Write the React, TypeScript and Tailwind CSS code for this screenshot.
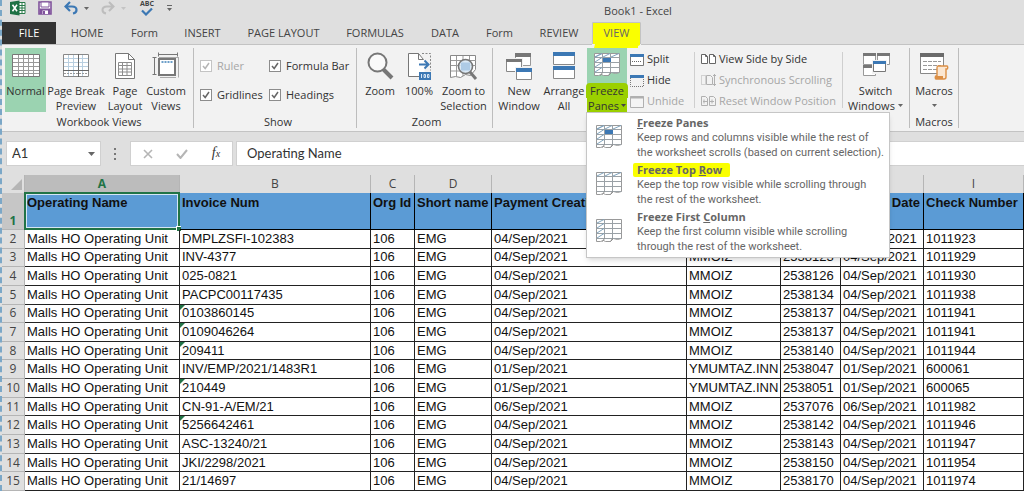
import type { ReactNode } from 'react';
import clsx from 'clsx';

type IconProps = { children: ReactNode; w?: number; h?: number };

function Svg({ children, w = 28, h = 28 }: IconProps) {
  return (
    <svg width={w} height={h} viewBox={`0 0 ${w} ${h}`} fill="none" className="shrink-0" aria-hidden="true">
      {children}
    </svg>
  );
}

function Caret({ className = 'text-[#666]' }: { className?: string }) {
  return (
    <svg width="5" height="3" viewBox="0 0 5 3" className={clsx('inline-block shrink-0', className)} aria-hidden="true">
      <path d="M0 0h5L2.500 3z" fill="currentColor" />
    </svg>
  );
}

/* ---------- quick access toolbar ---------- */

const excelIcon = (
  <Svg w={16} h={16}>
    <path d="M9 2.500h6v11H9" fill="#fff" stroke="#2a7a4b" />
    <path d="M9 5.500h6M9 8h6M9 10.500h6M12 3v10" stroke="#2a7a4b" />
    <path d="M0 2l9.500-1.500v15L0 14z" fill="#1e7145" />
    <path d="M2.500 4.800l4.500 6.400M7 4.800l-4.500 6.400" stroke="#fff" strokeWidth="1.600" />
  </Svg>
);

const saveIcon = (
  <Svg w={14} h={14}>
    <path d="M1 1h12v12H1z" fill="#fff" stroke="#80539c" strokeWidth="1.600" />
    <path d="M3 1h8v5H3z" fill="#fff" stroke="#80539c" />
    <path d="M1.500 7.500h11V13h-11z" fill="#80539c" />
    <path d="M4.500 9.500h5.500V13H4.500z" fill="#fff" />
    <path d="M5 10h2v3H5z" fill="#80539c" />
  </Svg>
);

const arrowPath = 'M6 1L1.500 5.500 6 10M2 5.500h6c3 0 4.500 1.500 4.500 3.500 0 1.500-1 3-3.500 3.500';

const undoIcon = (
  <Svg w={14} h={14}>
    <path d={arrowPath} stroke="#3c78b4" strokeWidth="2.200" />
  </Svg>
);

const redoIcon = (
  <Svg w={14} h={14}>
    <g transform="translate(14 0) scale(-1 1)">
      <path d={arrowPath} stroke="#bdbdbd" strokeWidth="2" />
    </g>
  </Svg>
);

/* ---------- ribbon icons ---------- */

const normalIcon = (
  <Svg>
    <path d="M.5 2.500h27v22H.5z" fill="#fff" stroke="#777" />
    <path d="M1 6.500h26M1 10.500h26M1 14.500h26M1 18.500h26M1 21.500h26M6.500 3v21M11.500 3v21M16.500 3v21M21.500 3v21" stroke="#999" />
  </Svg>
);

const pageBreakIcon = (
  <Svg>
    <path d="M1.500 2.500h25v22h-25z" fill="#fff" stroke="#888" />
    <path d="M2 6.500h24M2 10.500h24M2 14.500h24M6.500 3v21M11.500 3v21M20.500 3v21" stroke="#b9cfe0" />
    <path d="M16.500 2v23M1 18.500h26" stroke="#666" />
    <path d="M2 21.500h24" stroke="#999" strokeDasharray="2 1" />
  </Svg>
);

const pageLayoutIcon = (
  <Svg>
    <path d="M4.500 1.500h13l6 6v19h-19z" fill="#fff" stroke="#777" />
    <path d="M17.500 1.500v6h6" stroke="#777" />
    <path d="M7.500 10.500h13v13h-13zM7.500 13.500h13M7.500 17h13M7.500 20h13M11.500 10.500v13M16 10.500v13" stroke="#8d8d8d" />
  </Svg>
);

const customViewsIcon = (
  <Svg>
    <path d="M6.500 2.500h19M6.500.5v4M25.500.5v4M2.500 5v17M.5 5.500h4M.5 22.500h4" stroke="#777" />
    <path d="M7 5.500h20M26.500 5v20.500M8 25.500h16" stroke="#aaa" />
    <path d="M7 7h16v16H7z" fill="#fff" stroke="#777" strokeWidth="2" />
    <path d="M9.500 10h11" stroke="#6d9fc9" strokeWidth="2" strokeDasharray="2 1" />
  </Svg>
);

const zoomIcon = (
  <Svg>
    <path d="M17 17l9 9" stroke="#777" strokeWidth="4" />
    <circle cx="11.500" cy="10.500" r="9" fill="#fafafa" stroke="#777" strokeWidth="2" />
  </Svg>
);

const hundredIcon = (
  <Svg>
    <path d="M3.500 1.500h10l6 6v17h-16z" fill="#fff" />
    <path d="M14 24.500H3.500v-23h10l5 6h-5v-6" stroke="#777" />
    <path d="M17 1.500h8.500v17" stroke="#888" strokeDasharray="2 1.500" />
    <path d="M14 12.500h8M19.500 8.500l4 4-4 4" stroke="#3c78b4" strokeWidth="2" />
    <path d="M14 20h12v8H14z" fill="#3c78b4" />
    <path d="M16.500 22v4M19 22.500h1.500v3H19zM22.500 22.500H24v3h-1.500z" stroke="#dbe8f5" />
  </Svg>
);

const zoomSelectionIcon = (
  <Svg>
    <path d="M.5 3.500h25v14l-5 6-5-1-5 3-5-1-5 1z" fill="#fff" stroke="#888" />
    <path d="M1 8.500h25M1 13.500h25M1 19h14M6.500 4v20M13 4v20M19.500 4v8" stroke="#999" />
    <path d="M20 20l6 7" stroke="#777" strokeWidth="3" />
    <circle cx="15.500" cy="14.500" r="7" fill="#d8e8f5" fillOpacity=".9" stroke="#777" strokeWidth="1.600" />
    <path d="M11 10.500h9v8h-9z" fill="#aecbe6" />
  </Svg>
);

const newWindowIcon = (
  <Svg>
    <path d="M10.500 1.500h15v12h-15z" fill="#fff" stroke="#999" />
    <path d="M10 1h16v4H10z" fill="#777" />
    <path d="M0 6h18v14H0z" fill="#f2f2f2" />
    <path d="M1.500 7.500h15v12h-15z" fill="#fff" stroke="#888" />
    <path d="M1 7h16v3H1z" fill="#777" />
    <path d="M10 15h18v13H10z" fill="#f2f2f2" />
    <path d="M11.500 16.500h15v11h-15z" fill="#fff" stroke="#888" />
    <path d="M11 16h16v4H11z" fill="#3c78b4" />
  </Svg>
);

const arrangeIcon = (
  <Svg>
    <path d="M3.500.5h21v12h-21zM3.500 14.500h21v12h-21z" fill="#fff" stroke="#888" />
    <path d="M3 0h22v4H3zM3 14h22v4H3z" fill="#3c78b4" />
  </Svg>
);

type FreezeKind = 'panes' | 'row' | 'column';

function FreezeIcon({ kind }: { kind: FreezeKind }) {
  return (
    <Svg w={28} h={26}>
      <path d="M1.500 1.500h25v19l-4 1-4-1-3 3h-5l-2-1-3 1h-4z" fill="#fff" stroke="#999" />
      <path d="M1.500 5.500h25M1.500 10.500h25M1.500 15.500h25M1.500 20.500h25M9.500 1.500v19M17.500 1.500v19" stroke="#9aa1a6" />
      {kind !== 'column' && <path d="M2 5l7-3.500M10 5l7-3.500M18 5l8-3.500" stroke="#7fa3bd" />}
      {kind !== 'row' && <path d="M2 5l7-3.500M2 10l7-4.500M2 15l7-4.500M2 20l7-4.500" stroke="#7fa3bd" />}
      {kind === 'panes' && <path d="M10 6h8v4h-8z" fill="#3c78b4" />}
      <path d="M9.500 20.500l-2 3M17.500 20.500l-2 3" stroke="#888" />
    </Svg>
  );
}

const switchIcon = (
  <Svg>
    <path d="M1.500 1.500h12v11h-12zM15.500 1.500h12v11h-12zM1.500 13.500h12v10h-12z" fill="#fff" stroke="#999" />
    <path d="M1 1h13v3H1zM15 1h13v3H15zM1 13h13v3H1z" fill="#777" />
    <path d="M10 8h15v14H10z" fill="#f2f2f2" />
    <path d="M11.500 9.500h12v10h-12z" fill="#fff" stroke="#777" />
    <path d="M11 9h13v3H11z" fill="#3c78b4" />
  </Svg>
);

const macrosIcon = (
  <Svg w={30}>
    <path d="M1.500 1.500h23v20h-23z" fill="#fff" stroke="#888" />
    <path d="M1 1h24v4H1z" fill="#6b6b6b" />
    <path d="M4 9.500h18M4 13.500h18M4 17.500h14" stroke="#999" strokeDasharray="4 1" />
    <path d="M19 14h9c1 0 1 3 0 3h-1v8c0 2-1 2-2 2h-8c-1 0-1-3 0-3h1v-8c0-1 0-2 1-2z" fill="#fbe7d2" stroke="#dc8f45" strokeWidth="1.400" />
    <path d="M16 24h8v3h-8z" fill="#dc8f45" />
  </Svg>
);

/* ---------- small ribbon icons ---------- */

const splitIcon = (
  <Svg w={14} h={12}>
    <path d="M.5.5h13v11H.5z" fill="#fff" stroke="#777" />
    <path d="M0 0h14v3H0z" fill="#3c78b4" />
    <path d="M2 7.500h10" stroke="#666" strokeDasharray="1 1" />
  </Svg>
);

const hideIcon = (
  <Svg w={14} h={12}>
    <path d="M.5 3v8.500h13V3" stroke="#777" strokeDasharray="1 1" />
    <path d="M0 0h14v3H0z" fill="#3c78b4" />
  </Svg>
);

const unhideIcon = (
  <Svg w={14} h={12}>
    <path d="M.5.5h13v11H.5z" fill="#f4f4f4" stroke="#b0b0b0" />
    <path d="M0 1.500h14" stroke="#b0b0b0" strokeWidth="2" />
  </Svg>
);

const sideIcon = (
  <Svg w={15} h={12}>
    <path d="M.5 1.500h4l2 2v7h-6zM8.500 1.500h4l2 2v7h-6z" fill="#fff" stroke="#666" />
    <path d="M4.500 1.500v2h2M12.500 1.500v2h2" stroke="#666" />
  </Svg>
);

const syncIcon = (
  <Svg w={15} h={12}>
    <path d="M.5 1.500h4v9h-4z" stroke="#b0b0b0" strokeDasharray="1 1" />
    <path d="M5.500 1.500h4l2 2v7h-6zM13.500 0v12M12 2l1.500-1.500L15 2M12 10l1.500 1.500L15 10" stroke="#b0b0b0" />
  </Svg>
);

const resetIcon = (
  <Svg w={15} h={12}>
    <path d="M.5 1.500h4l2 2v7h-6zM8.500 1.500h4l2 2v7h-6z" stroke="#b0b0b0" />
    <path d="M2 6.500h4M9 6.500h4M3 4.500v4M11 4.500v4" stroke="#b0b0b0" />
  </Svg>
);

/* ---------- ribbon ---------- */

const tabs = [
  { label: 'HOME', width: 'w-[62px]' },
  { label: 'Form', width: 'w-[53px]' },
  { label: 'INSERT', width: 'w-[63px]' },
  { label: 'PAGE LAYOUT', width: 'w-[99px]' },
  { label: 'FORMULAS', width: 'w-[84px]' },
  { label: 'DATA', width: 'w-[56px]' },
  { label: 'Form', width: 'w-[53px]' },
  { label: 'REVIEW', width: 'w-[66px]' },
];

function BigButton({ icon, lines, className, caret }: { icon: ReactNode; lines: string[]; className: string; caret?: boolean }) {
  return (
    <button className={clsx('flex h-16 shrink-0 flex-col items-center pt-1 leading-[15px] whitespace-nowrap', className)}>
      <span className="mb-[3px] block h-7">{icon}</span>
      {lines.map((line, i) => (
        <span key={line} className="flex h-[15px] items-center gap-[3px]">
          {line}
          {caret && i === lines.length - 1 && <Caret />}
        </span>
      ))}
    </button>
  );
}

function SmallButton({ icon, label, disabled }: { icon: ReactNode; label: string; disabled?: boolean }) {
  return (
    <button disabled={disabled} className="flex h-[21px] items-center gap-[3px] whitespace-nowrap disabled:text-[#a6a6a6]">
      {icon}
      {label}
    </button>
  );
}

function Group({ label, className, children }: { label: string; className: string; children: ReactNode }) {
  return (
    <section className={clsx('flex shrink-0 flex-col justify-between border-r border-[#bdbdbd]', className)}>
      <div className="flex h-16">{children}</div>
      <div className="h-3 text-center leading-3">{label}</div>
    </section>
  );
}

function Check({ label, disabled }: { label: string; disabled?: boolean }) {
  return (
    <label className={clsx('flex h-4 items-center gap-[5px] whitespace-nowrap', disabled && 'text-[#a6a6a6]')}>
      <span className="relative block size-3">
        <input type="checkbox" defaultChecked disabled={disabled} className="peer block size-3 appearance-none border border-[#8c8c8c] bg-white disabled:border-[#c4c4c4]" />
        <svg viewBox="0 0 12 12" className="pointer-events-none absolute inset-0 hidden peer-checked:block" fill="none" stroke={disabled ? '#b5b5b5' : '#666'} strokeWidth="1.500">
          <path d="M3 6l2.200 2.500L9 3" />
        </svg>
      </span>
      {label}
    </label>
  );
}

const freezeOptions: { kind: FreezeKind; title: ReactNode; text: string[]; marked?: boolean }[] = [
  {
    kind: 'panes',
    title: <><u>F</u>reeze Panes</>,
    text: ['Keep rows and columns visible while the rest of', 'the worksheet scrolls (based on current selection).'],
  },
  {
    kind: 'row',
    title: <>Freeze Top <u>R</u>ow</>,
    text: ['Keep the top row visible while scrolling through', 'the rest of the worksheet.'],
    marked: true,
  },
  {
    kind: 'column',
    title: <>Freeze First <u>C</u>olumn</>,
    text: ['Keep the first column visible while scrolling', 'through the rest of the worksheet.'],
  },
];

function FreezeMenu() {
  return (
    <div role="menu" className="absolute top-16 -left-px z-20 w-[304px] border border-[#c6c6c6] bg-white pt-[3px] shadow-md">
      {freezeOptions.map(({ kind, title, text, marked }) => (
        <button key={kind} role="menuitem" className="flex h-[47px] w-full items-start gap-[14px] pl-2 text-left whitespace-nowrap text-[#666]">
          <span className="pt-2"><FreezeIcon kind={kind} /></span>
          <span>
            <span className={clsx('-ml-1 block h-[14px] w-fit px-1 leading-[14px] font-bold', marked && 'rounded-xs bg-[#faff00] pr-2')}>
              {title}
            </span>
            {text.map((line) => (
              <span key={line} className="block font-[Roboto,sans-serif] leading-[15px]">{line}</span>
            ))}
          </span>
        </button>
      ))}
    </div>
  );
}

function FreezeButton() {
  return (
    <div className="relative">
      <button className="flex h-16 w-10 flex-col items-center bg-[#9bd3b1] pt-1 leading-[15px]">
        <span className="mb-[3px] block h-7"><FreezeIcon kind="panes" /></span>
        <span className="h-[15px] rounded-t-sm bg-[#9bd000] px-1">Freeze</span>
        <span className="flex h-[14px] items-center gap-[2px] bg-[#9bd000] px-px">
          Panes
          <Caret className="text-[#444]" />
        </span>
      </button>
      <FreezeMenu />
    </div>
  );
}

function Ribbon() {
  return (
    <div className="flex h-[88px] shrink-0 border-y border-[#c3c3c3] bg-[#f2f2f2] py-[3px] text-[#333]">
      <Group label="Workbook Views" className="w-[192px] pl-[3px]">
        <BigButton icon={normalIcon} lines={['Normal']} className="w-[41px] bg-[#9bd3b1]" />
        <BigButton icon={pageBreakIcon} lines={['Page Break', 'Preview']} className="w-[60px]" />
        <BigButton icon={pageLayoutIcon} lines={['Page', 'Layout']} className="w-[38px]" />
        <BigButton icon={customViewsIcon} lines={['Custom', 'Views']} className="w-[44px]" />
      </Group>
      <Group label="Show" className="w-[163px] pl-[6px]">
        <div className="grid grid-cols-[69px_1fr] content-start gap-y-[13px] pt-[10px]">
          <Check label="Ruler" disabled />
          <Check label="Formula Bar" />
          <Check label="Gridlines" />
          <Check label="Headings" />
        </div>
      </Group>
      <Group label="Zoom" className="w-[136px] pl-1">
        <BigButton icon={zoomIcon} lines={['Zoom']} className="w-[38px]" />
        <BigButton icon={hundredIcon} lines={['100%']} className="w-[40px]" />
        <BigButton icon={zoomSelectionIcon} lines={['Zoom to', 'Selection']} className="w-[49px]" />
      </Group>
      <Group label="" className="w-[417px] pl-1">
        <BigButton icon={newWindowIcon} lines={['New', 'Window']} className="w-[44px]" />
        <BigButton icon={arrangeIcon} lines={['Arrange', 'All']} className="w-[46px]" />
        <FreezeButton />
        <div className="w-[67px] pt-px pl-[3px]">
          <SmallButton icon={splitIcon} label="Split" />
          <SmallButton icon={hideIcon} label="Hide" />
          <SmallButton icon={unhideIcon} label="Unhide" disabled />
        </div>
        <div className="flex w-[149px] items-center border-[#cfcfcf]">
          <div className="h-14 w-px bg-[#cfcfcf]" />
          <div className="flex-1 pl-[6px]">
            <SmallButton icon={sideIcon} label="View Side by Side" />
            <SmallButton icon={syncIcon} label="Synchronous Scrolling" disabled />
            <SmallButton icon={resetIcon} label="Reset Window Position" disabled />
          </div>
          <div className="h-14 w-px bg-[#cfcfcf]" />
        </div>
        <BigButton icon={switchIcon} lines={['Switch', 'Windows']} className="w-[65px]" caret />
      </Group>
      <Group label="Macros" className="w-[49px]">
        <BigButton icon={macrosIcon} lines={['Macros', '']} className="w-12" caret />
      </Group>
    </div>
  );
}

function FormulaBar() {
  return (
    <div className="flex h-[43px] shrink-0 py-[9px] pl-1 text-[#333]">
      <div className="flex w-[95px] items-center border border-[#d0d0d0] bg-white pr-[5px]">
        <input aria-label="Name box" defaultValue="A1" className="w-full min-w-0 pl-[5px] font-[Lato,sans-serif] text-[13px] outline-none" />
        <button aria-label="Named cells">
          <svg width="7" height="4" viewBox="0 0 7 4" className="block"><path d="M0 0h7L3.500 4z" fill="#666" /></svg>
        </button>
      </div>
      <svg width="29" height="25" viewBox="0 0 29 25" fill="#777" aria-hidden="true">
        <path d="M13 7h2v2h-2zM13 12h2v2h-2zM13 17h2v2h-2z" />
      </svg>
      <div className="flex w-[103px] items-center justify-around border border-[#d0d0d0] bg-white">
        <button aria-label="Cancel"><Svg w={10} h={10}><path d="M1 1l8 8M9 1L1 9" stroke="#b5b5b5" strokeWidth="1.600" /></Svg></button>
        <button aria-label="Enter"><Svg w={12} h={10}><path d="M1 5l3.500 4L11 1" stroke="#b5b5b5" strokeWidth="2" /></Svg></button>
        <button aria-label="Insert function" className="font-['Liberation_Serif',serif] text-[14px] leading-4 italic">
          f<span className="text-[10px]">x</span>
        </button>
      </div>
      <input aria-label="Formula" defaultValue="Operating Name" className="ml-[3px] min-w-0 flex-1 border border-r-0 border-[#d0d0d0] bg-white pl-[10px] font-[Lato,sans-serif] text-[13px] outline-none" />
    </div>
  );
}

/* ---------- sheet ---------- */

const columns = [
  { letter: 'A', title: 'Operating Name', width: 'w-[155px]' },
  { letter: 'B', title: 'Invoice Num', width: 'w-[191px]' },
  { letter: 'C', title: 'Org Id', width: 'w-[44px]' },
  { letter: 'D', title: 'Short name', width: 'w-[77px]' },
  { letter: 'E', title: 'Payment Creation', width: 'w-[195px]' },
  { letter: 'F', title: '', width: 'w-[94px]' },
  { letter: 'G', title: '', width: 'w-[60px]' },
  { letter: 'H', title: 'Date', width: 'w-[83px]' },
  { letter: 'I', title: 'Check Number', width: '' },
];

// invoice, day, created by, document, check number
const records = [
  ['DMPLZSFI-102383', '04', 'MMOIZ', '2538122', '1011923'],
  ['INV-4377', '04', 'MMOIZ', '2538123', '1011929'],
  ['025-0821', '04', 'MMOIZ', '2538126', '1011930'],
  ['PACPC00117435', '04', 'MMOIZ', '2538134', '1011938'],
  ['0103860145', '04', 'MMOIZ', '2538137', '1011941'],
  ['0109046264', '04', 'MMOIZ', '2538137', '1011941'],
  ['209411', '04', 'MMOIZ', '2538140', '1011944'],
  ['INV/EMP/2021/1483R1', '01', 'YMUMTAZ.INN', '2538047', '600061'],
  ['210449', '01', 'YMUMTAZ.INN', '2538051', '600065'],
  ['CN-91-A/EM/21', '06', 'MMOIZ', '2537076', '1011982'],
  ['5256642461', '04', 'MMOIZ', '2538142', '1011946'],
  ['ASC-13240/21', '04', 'MMOIZ', '2538143', '1011947'],
  ['JKI/2298/2021', '04', 'MMOIZ', '2538150', '1011954'],
  ['21/14697', '04', 'MMOIZ', '2538170', '1011974'],
];

// numbers stored as text get the green corner
const isTextNumber = (value: string) => /^\d+$/.test(value);

function Sheet() {
  return (
    <div className="min-h-0 flex-1">
      <table className="h-full w-full table-fixed border-separate border-spacing-0 font-['Liberation_Sans',Arial,sans-serif] text-[13px] leading-4 whitespace-nowrap text-[#111]">
        <thead className="font-['Open_Sans',sans-serif] text-[12px] text-[#444]">
          <tr className="h-[18px] bg-[#dfdfdf]">
            <th className="w-[23px] border-r border-[#b5b5b5] p-0 align-bottom">
              <svg width="11" height="11" viewBox="0 0 11 11" className="mb-[3px] ml-[9px] block"><path d="M11 0v11H0z" fill="#b5b5b5" /></svg>
            </th>
            {columns.map(({ letter, width }) => (
              <th
                key={letter}
                scope="col"
                className={clsx('border-r border-[#b5b5b5] p-0', width, letter === 'A' ? 'bg-[#bcbcbc] font-bold text-[#217346]' : 'font-normal')}
              >
                {letter}
              </th>
            ))}
          </tr>
        </thead>
        <tbody>
          <tr className="h-[37px] bg-[#5b9bd5] font-bold">
            <th scope="row" className="border-r border-b border-[#b5b5b5] bg-[#c6c6c6] p-0 align-bottom font-['Open_Sans',sans-serif] text-[12px] text-[#217346]">1</th>
            {columns.map(({ letter, title }) => (
              <td key={letter} className={clsx('relative border-r border-b border-black p-0 pt-[2px] pl-[2px] align-top', letter === 'H' && 'pr-[3px] text-right')}>
                {title}
                {letter === 'A' && (
                  <div className="absolute -inset-px border-2 border-[#217346] outline-1 -outline-offset-3 outline-[#d6e6f5]">
                    <span className="absolute -right-[3px] -bottom-[3px] size-[5px] border-t border-l border-white bg-[#217346]" />
                  </div>
                )}
              </td>
            ))}
          </tr>
          {records.map(([invoice, day, user, doc, check], i) => {
            const date = `${day}/Sep/2021`;
            const cells = ['Malls HO Operating Unit', invoice, '106', 'EMG', date, user, doc, date, check];
            return (
              <tr key={invoice} className="bg-white">
                <th scope="row" className="border-r border-b border-[#b5b5b5] bg-[#dfdfdf] p-0 font-['Open_Sans',sans-serif] text-[12px] font-normal text-[#444]">
                  {i + 2}
                </th>
                {cells.map((cell, c) => (
                  <td key={c} className="relative border-r border-b border-[#222] p-0 pl-[2px]">
                    {c === 1 && isTextNumber(cell) && (
                      <svg width="5" height="5" viewBox="0 0 5 5" className="absolute top-0 left-0"><path d="M0 0h5L0 5z" fill="#217346" /></svg>
                    )}
                    {cell}
                  </td>
                ))}
              </tr>
            );
          })}
        </tbody>
      </table>
    </div>
  );
}

export default function App() {
  return (
    <div className="relative flex h-screen min-w-[1024px] flex-col overflow-hidden border-l-2 border-dashed border-[#7ba7c7] bg-[#dfdfdf] font-['Open_Sans',sans-serif] text-[11px] text-[#444]">
      <header className="flex h-[22px] shrink-0 items-start">
        <div className="flex h-4 w-[250px] items-center pl-2">
          <button aria-label="Excel">{excelIcon}</button>
          <button aria-label="Save" className="ml-3">{saveIcon}</button>
          <button aria-label="Undo" className="ml-3 flex items-center gap-[6px]">{undoIcon}<Caret /></button>
          <button aria-label="Redo" disabled className="ml-3 flex items-center gap-[6px]">{redoIcon}<Caret className="text-[#c4c4c4]" /></button>
          <button aria-label="Spelling" className="ml-[14px] flex flex-col items-center">
            <span className="text-[7px] leading-2 font-bold">ABC</span>
            <Svg w={12} h={8}><path d="M1 2.500l4 4L11 .5" stroke="#3c78b4" strokeWidth="2.200" /></Svg>
          </button>
          <button aria-label="Customize toolbar" className="ml-[13px]">
            <svg width="5" height="6" viewBox="0 0 5 6" className="block"><path d="M0 0h5v1H0zM0 3h5L2.500 6z" fill="#666" /></svg>
          </button>
        </div>
        <h1 className="flex-1 text-center leading-[21px]">Book1 - Excel</h1>
      </header>
      <nav className="flex h-[22px] shrink-0 whitespace-nowrap">
        <button className="w-[54px] bg-[#333] text-white">FILE</button>
        {tabs.map(({ label, width }, i) => (
          <button key={i} className={width}>{label}</button>
        ))}
        <button className="relative z-10 w-[49px] text-[#666]">
          <svg viewBox="0 0 49 26" className="absolute top-0 left-0 h-[26px] w-[49px]" aria-hidden="true">
            <path d="M0 0h49v23H0z" fill="#f2f2f2" />
            <path d="M.5 22V.5h48V22" fill="none" stroke="#c3c3c3" />
            <path d="M1 1h47v22l-2 1v2H2l1-4H1z" fill="#faff00" />
          </svg>
          <span className="relative">VIEW</span>
        </button>
      </nav>
      <Ribbon />
      <FormulaBar />
      <Sheet />
    </div>
  );
}
